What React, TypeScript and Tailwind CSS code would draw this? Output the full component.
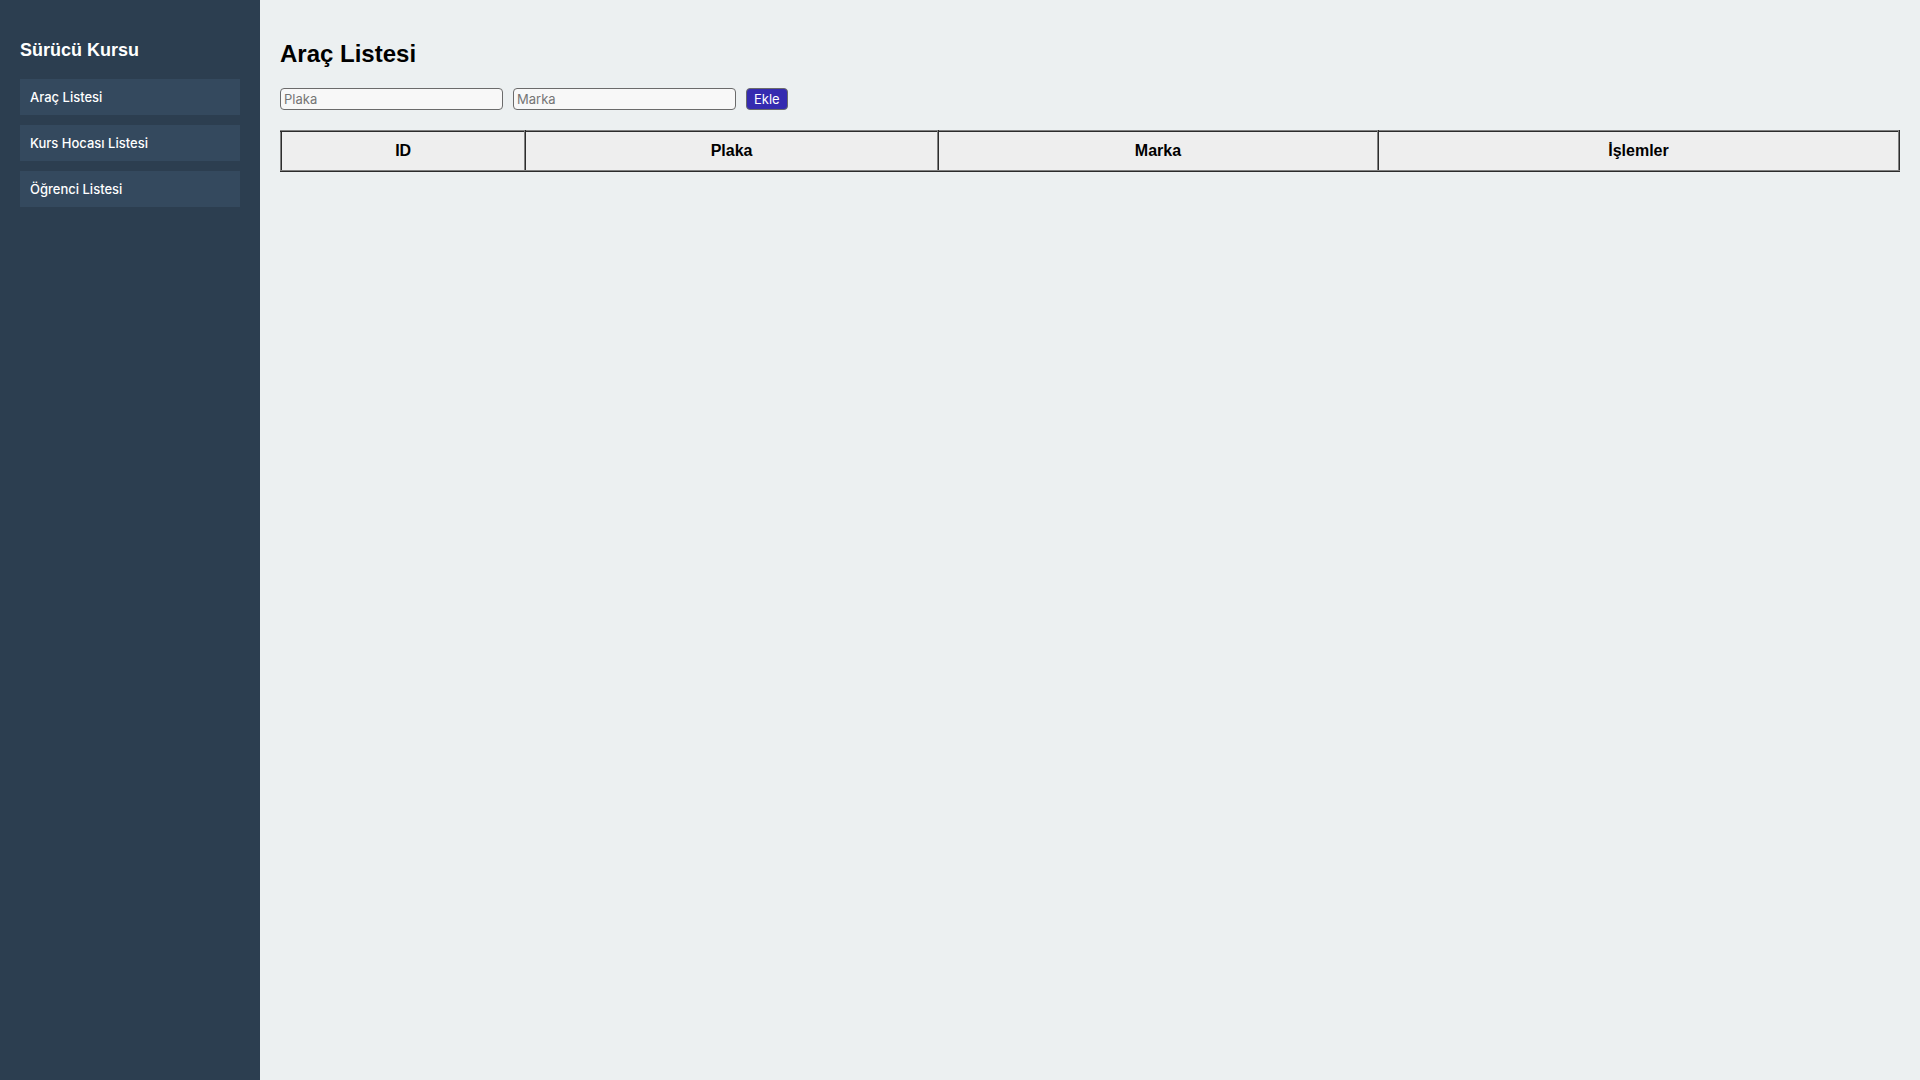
import React, { useState } from "react";

interface Vehicle {
  id: number;
  plaka: string;
  marka: string;
}

const menuItems = ["Araç Listesi", "Kurs Hocası Listesi", "Öğrenci Listesi"];

const inputClass =
  "w-[223px] h-[22px] px-[3px] rounded-[4px] border border-[#6b6b6b] bg-[#f8f8f8] font-['Inter',sans-serif] text-[13px] text-black placeholder:text-[#757575]";

const cellClass = "border-2 [border-style:inset] border-[#808080] p-[10px]";

const Sidebar = () => {
  return (
    <aside className="w-[260px] shrink-0 bg-[#2c3e50] p-5 text-white">
      <h3 className="mt-5 mb-[18px] text-lg leading-[21px] font-bold">
        Sürücü Kursu
      </h3>
      <nav className="flex flex-col gap-[10px]">
        {menuItems.map((item) => (
          <button
            key={item}
            type="button"
            className="w-full bg-[#34495e] p-[10px] text-left font-['Inter',sans-serif] text-[13px] leading-4 font-medium"
          >
            {item}
          </button>
        ))}
      </nav>
    </aside>
  );
};

const VehicleList = () => {
  const [vehicles, setVehicles] = useState<Vehicle[]>([]);
  const [plaka, setPlaka] = useState("");
  const [marka, setMarka] = useState("");

  const handleAdd = () => {
    if (!plaka || !marka) return;
    setVehicles([...vehicles, { id: vehicles.length + 1, plaka, marka }]);
    setPlaka("");
    setMarka("");
  };

  const handleDelete = (id: number) => {
    setVehicles(vehicles.filter((vehicle) => vehicle.id !== id));
  };

  return (
    <main className="min-w-0 flex-1 bg-[#ecf0f1] p-5 text-black">
      <h2 className="my-5 text-2xl leading-7 font-bold">Araç Listesi</h2>
      <div className="mb-5 flex gap-[10px]">
        <input
          type="text"
          placeholder="Plaka"
          aria-label="Plaka"
          value={plaka}
          onChange={(e) => setPlaka(e.target.value)}
          className={inputClass}
        />
        <input
          type="text"
          placeholder="Marka"
          aria-label="Marka"
          value={marka}
          onChange={(e) => setMarka(e.target.value)}
          className={inputClass}
        />
        <button
          type="button"
          onClick={handleAdd}
          className="h-[22px] rounded-[4px] border border-[#6b6b6b] bg-[#352bb0] px-[7px] font-['Inter',sans-serif] text-[13px] leading-5 text-white"
        >
          Ekle
        </button>
      </div>
      <table className="w-full border-collapse border-2 [border-style:inset] border-[#808080] text-base leading-[18px]">
        <colgroup>
          <col className="w-[15.1%]" />
          <col className="w-[25.5%]" />
          <col className="w-[27.2%]" />
          <col className="w-[32.2%]" />
        </colgroup>
        <thead>
          <tr className="bg-[#eeeeee]">
            <th className={cellClass}>ID</th>
            <th className={cellClass}>Plaka</th>
            <th className={cellClass}>Marka</th>
            <th className={cellClass}>İşlemler</th>
          </tr>
        </thead>
        <tbody>
          {vehicles.map((vehicle) => (
            <tr key={vehicle.id} className="text-center">
              <td className={cellClass}>{vehicle.id}</td>
              <td className={cellClass}>{vehicle.plaka}</td>
              <td className={cellClass}>{vehicle.marka}</td>
              <td className={cellClass}>
                <button type="button" onClick={() => handleDelete(vehicle.id)}>
                  Sil
                </button>
              </td>
            </tr>
          ))}
        </tbody>
      </table>
    </main>
  );
};

export default function App() {
  return (
    <div className="flex min-h-screen font-['Liberation_Sans',sans-serif]">
      <Sidebar />
      <VehicleList />
    </div>
  );
}
